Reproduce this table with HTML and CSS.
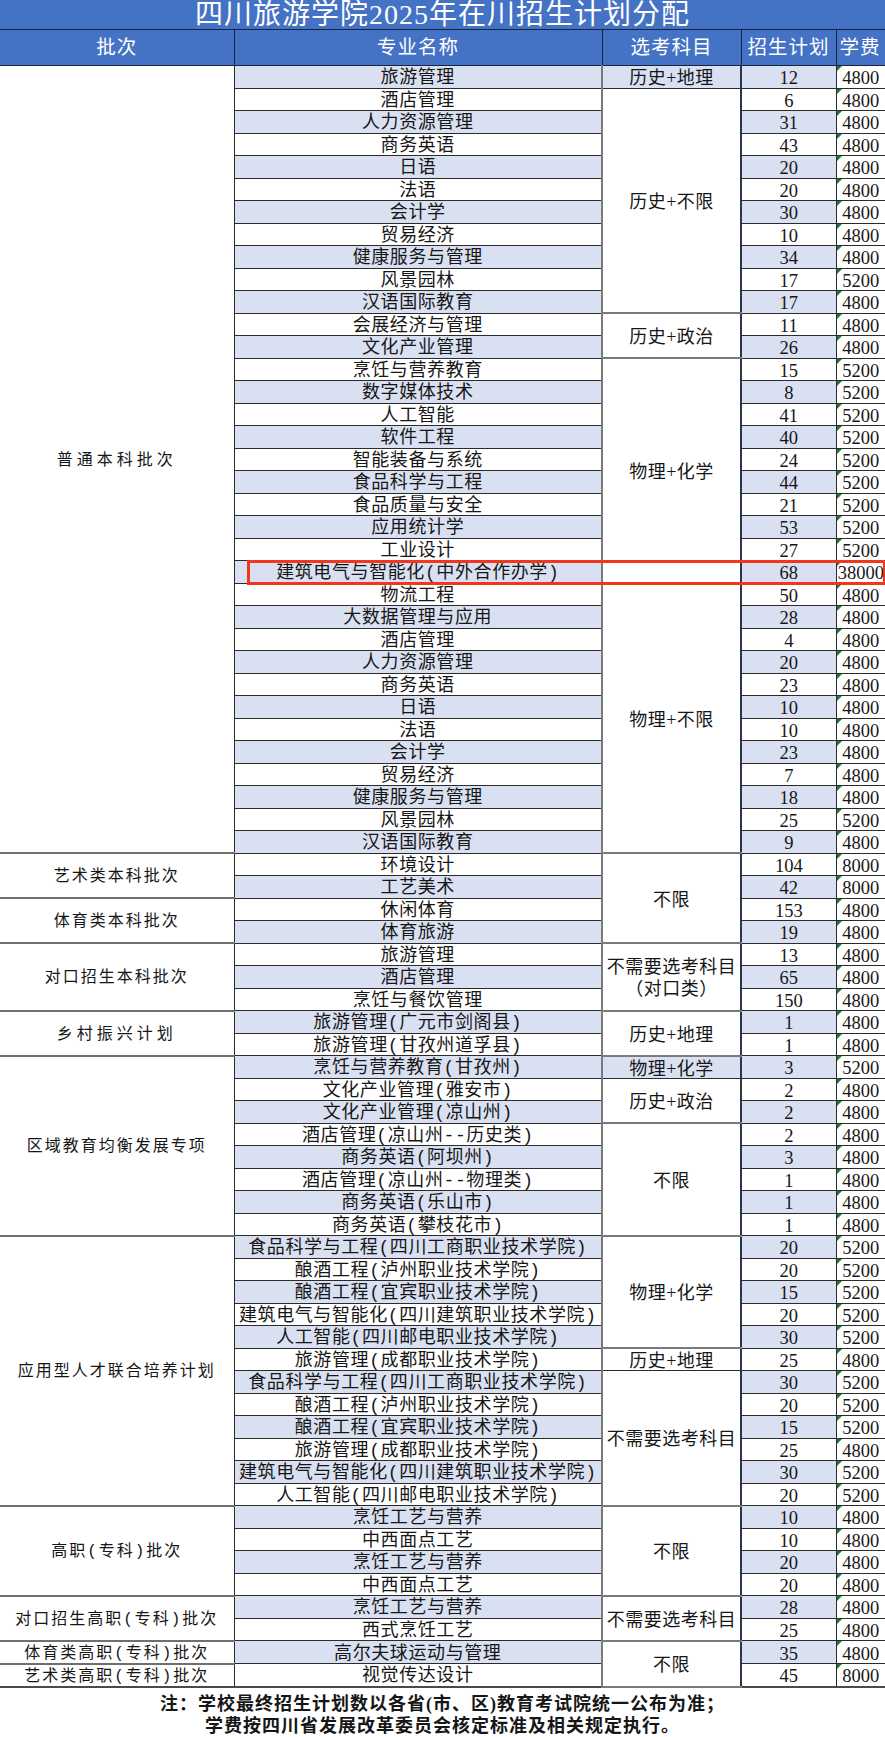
FILE: index.html
```html
<!DOCTYPE html>
<html lang="zh-CN">
<head>
<meta charset="utf-8">
<title>四川旅游学院2025年在川招生计划分配</title>
<link rel="stylesheet" href="styles.css">
</head>
<body>
<div class="title">四川旅游学院2025年在川招生计划分配</div>
<table class="plan">
<colgroup><col class="c1"><col class="c2"><col class="c3"><col class="c4"><col class="c5"></colgroup>
<thead>
<tr><th>批次</th><th>专业名称</th><th>选考科目</th><th>招生计划</th><th class="fh">学费</th></tr>
</thead>
<tbody>
<tr><td class="b wide" rowspan="35">普通本科批次</td><td class="m">旅游管理</td><td class="s1">历史+地理</td><td class="n">12</td><td class="f">4800</td></tr>
<tr><td class="m">酒店管理</td><td class="s" rowspan="10">历史+不限</td><td class="n">6</td><td class="f">4800</td></tr>
<tr><td class="m">人力资源管理</td><td class="n">31</td><td class="f">4800</td></tr>
<tr><td class="m">商务英语</td><td class="n">43</td><td class="f">4800</td></tr>
<tr><td class="m">日语</td><td class="n">20</td><td class="f">4800</td></tr>
<tr><td class="m">法语</td><td class="n">20</td><td class="f">4800</td></tr>
<tr><td class="m">会计学</td><td class="n">30</td><td class="f">4800</td></tr>
<tr><td class="m">贸易经济</td><td class="n">10</td><td class="f">4800</td></tr>
<tr><td class="m">健康服务与管理</td><td class="n">34</td><td class="f">4800</td></tr>
<tr><td class="m">风景园林</td><td class="n">17</td><td class="f">5200</td></tr>
<tr><td class="m">汉语国际教育</td><td class="n">17</td><td class="f">4800</td></tr>
<tr><td class="m">会展经济与管理</td><td class="s" rowspan="2">历史+政治</td><td class="n">11</td><td class="f">4800</td></tr>
<tr><td class="m">文化产业管理</td><td class="n">26</td><td class="f">4800</td></tr>
<tr><td class="m">烹饪与营养教育</td><td class="s" rowspan="10">物理+化学</td><td class="n">15</td><td class="f">5200</td></tr>
<tr><td class="m">数字媒体技术</td><td class="n">8</td><td class="f">5200</td></tr>
<tr><td class="m">人工智能</td><td class="n">41</td><td class="f">5200</td></tr>
<tr><td class="m">软件工程</td><td class="n">40</td><td class="f">5200</td></tr>
<tr><td class="m">智能装备与系统</td><td class="n">24</td><td class="f">5200</td></tr>
<tr><td class="m">食品科学与工程</td><td class="n">44</td><td class="f">5200</td></tr>
<tr><td class="m">食品质量与安全</td><td class="n">21</td><td class="f">5200</td></tr>
<tr><td class="m">应用统计学</td><td class="n">53</td><td class="f">5200</td></tr>
<tr><td class="m">工业设计</td><td class="n">27</td><td class="f">5200</td></tr>
<tr><td class="m hlcell">建筑电气与智能化(中外合作办学)<span class="hl"></span></td><td class="n">68</td><td class="f">38000</td></tr>
<tr><td class="m">物流工程</td><td class="s" rowspan="12">物理+不限</td><td class="n">50</td><td class="f">4800</td></tr>
<tr><td class="m">大数据管理与应用</td><td class="n">28</td><td class="f">4800</td></tr>
<tr><td class="m">酒店管理</td><td class="n">4</td><td class="f">4800</td></tr>
<tr><td class="m">人力资源管理</td><td class="n">20</td><td class="f">4800</td></tr>
<tr><td class="m">商务英语</td><td class="n">23</td><td class="f">4800</td></tr>
<tr><td class="m">日语</td><td class="n">10</td><td class="f">4800</td></tr>
<tr><td class="m">法语</td><td class="n">10</td><td class="f">4800</td></tr>
<tr><td class="m">会计学</td><td class="n">23</td><td class="f">4800</td></tr>
<tr><td class="m">贸易经济</td><td class="n">7</td><td class="f">4800</td></tr>
<tr><td class="m">健康服务与管理</td><td class="n">18</td><td class="f">4800</td></tr>
<tr><td class="m">风景园林</td><td class="n">25</td><td class="f">5200</td></tr>
<tr><td class="m">汉语国际教育</td><td class="n">9</td><td class="f">4800</td></tr>
<tr><td class="b" rowspan="2">艺术类本科批次</td><td class="m">环境设计</td><td class="s" rowspan="4">不限</td><td class="n">104</td><td class="f">8000</td></tr>
<tr><td class="m">工艺美术</td><td class="n">42</td><td class="f">8000</td></tr>
<tr><td class="b" rowspan="2">体育类本科批次</td><td class="m">休闲体育</td><td class="n">153</td><td class="f">4800</td></tr>
<tr><td class="m">体育旅游</td><td class="n">19</td><td class="f">4800</td></tr>
<tr><td class="b" rowspan="3">对口招生本科批次</td><td class="m">旅游管理</td><td class="s two" rowspan="3">不需要选考科目<br>（对口类）</td><td class="n">13</td><td class="f">4800</td></tr>
<tr><td class="m">酒店管理</td><td class="n">65</td><td class="f">4800</td></tr>
<tr><td class="m">烹饪与餐饮管理</td><td class="n">150</td><td class="f">4800</td></tr>
<tr><td class="b wide" rowspan="2">乡村振兴计划</td><td class="m">旅游管理(广元市剑阁县)</td><td class="s" rowspan="2">历史+地理</td><td class="n">1</td><td class="f">4800</td></tr>
<tr><td class="m">旅游管理(甘孜州道孚县)</td><td class="n">1</td><td class="f">4800</td></tr>
<tr><td class="b" rowspan="8">区域教育均衡发展专项</td><td class="m">烹饪与营养教育(甘孜州)</td><td class="s1">物理+化学</td><td class="n">3</td><td class="f">5200</td></tr>
<tr><td class="m">文化产业管理(雅安市)</td><td class="s" rowspan="2">历史+政治</td><td class="n">2</td><td class="f">4800</td></tr>
<tr><td class="m">文化产业管理(凉山州)</td><td class="n">2</td><td class="f">4800</td></tr>
<tr><td class="m">酒店管理(凉山州--历史类)</td><td class="s" rowspan="5">不限</td><td class="n">2</td><td class="f">4800</td></tr>
<tr><td class="m">商务英语(阿坝州)</td><td class="n">3</td><td class="f">4800</td></tr>
<tr><td class="m">酒店管理(凉山州--物理类)</td><td class="n">1</td><td class="f">4800</td></tr>
<tr><td class="m">商务英语(乐山市)</td><td class="n">1</td><td class="f">4800</td></tr>
<tr><td class="m">商务英语(攀枝花市)</td><td class="n">1</td><td class="f">4800</td></tr>
<tr><td class="b" rowspan="12">应用型人才联合培养计划</td><td class="m">食品科学与工程(四川工商职业技术学院)</td><td class="s" rowspan="5">物理+化学</td><td class="n">20</td><td class="f">5200</td></tr>
<tr><td class="m">酿酒工程(泸州职业技术学院)</td><td class="n">20</td><td class="f">5200</td></tr>
<tr><td class="m">酿酒工程(宜宾职业技术学院)</td><td class="n">15</td><td class="f">5200</td></tr>
<tr><td class="m">建筑电气与智能化(四川建筑职业技术学院)</td><td class="n">20</td><td class="f">5200</td></tr>
<tr><td class="m">人工智能(四川邮电职业技术学院)</td><td class="n">30</td><td class="f">5200</td></tr>
<tr><td class="m">旅游管理(成都职业技术学院)</td><td class="s1">历史+地理</td><td class="n">25</td><td class="f">4800</td></tr>
<tr><td class="m">食品科学与工程(四川工商职业技术学院)</td><td class="s" rowspan="6">不需要选考科目</td><td class="n">30</td><td class="f">5200</td></tr>
<tr><td class="m">酿酒工程(泸州职业技术学院)</td><td class="n">20</td><td class="f">5200</td></tr>
<tr><td class="m">酿酒工程(宜宾职业技术学院)</td><td class="n">15</td><td class="f">5200</td></tr>
<tr><td class="m">旅游管理(成都职业技术学院)</td><td class="n">25</td><td class="f">4800</td></tr>
<tr><td class="m">建筑电气与智能化(四川建筑职业技术学院)</td><td class="n">30</td><td class="f">5200</td></tr>
<tr><td class="m">人工智能(四川邮电职业技术学院)</td><td class="n">20</td><td class="f">5200</td></tr>
<tr><td class="b" rowspan="4">高职(专科)批次</td><td class="m">烹饪工艺与营养</td><td class="s" rowspan="4">不限</td><td class="n">10</td><td class="f">4800</td></tr>
<tr><td class="m">中西面点工艺</td><td class="n">10</td><td class="f">4800</td></tr>
<tr><td class="m">烹饪工艺与营养</td><td class="n">20</td><td class="f">4800</td></tr>
<tr><td class="m">中西面点工艺</td><td class="n">20</td><td class="f">4800</td></tr>
<tr><td class="b" rowspan="2">对口招生高职(专科)批次</td><td class="m">烹饪工艺与营养</td><td class="s" rowspan="2">不需要选考科目</td><td class="n">28</td><td class="f">4800</td></tr>
<tr><td class="m">西式烹饪工艺</td><td class="n">25</td><td class="f">4800</td></tr>
<tr><td class="b">体育类高职(专科)批次</td><td class="m">高尔夫球运动与管理</td><td class="s" rowspan="2">不限</td><td class="n">35</td><td class="f">4800</td></tr>
<tr><td class="b">艺术类高职(专科)批次</td><td class="m">视觉传达设计</td><td class="n">45</td><td class="f">8000</td></tr>
</tbody>
</table>
<div class="note">
<p>注：学校最终招生计划数以各省(市、区)教育考试院统一公布为准；</p>
<p>学费按四川省发展改革委员会核定标准及相关规定执行。</p>
</div>
</body>
</html>
```
FILE: styles.css
```css
html, body {
  margin: 0;
  padding: 0;
  overflow-x: hidden;
  background: #ffffff;
}

body {
  width: 885px;
  font-family: "Liberation Serif", "Noto Sans CJK SC", serif;
  color: #161616;
}

.title {
  height: 29px;
  background: #4472c4;
  color: #ffffff;
  font-size: 28px;
  line-height: 30px;
  letter-spacing: 1px;
  text-align: center;
  white-space: nowrap;
}

.plan {
  width: 885px;
  border-collapse: collapse;
  table-layout: fixed;
}

.c1 { width: 234px; }
.c2 { width: 368px; }
.c3 { width: 139px; }
.c4 { width: 95px; }
.c5 { width: 49px; }

.plan thead tr {
  height: 36px;
}

.plan th {
  background: #4472c4;
  color: #ffffff;
  font-weight: normal;
  font-size: 19.5px;
  letter-spacing: 1px;
  line-height: 22px;
  padding: 0;
  border: 1px solid #17243d;
  white-space: nowrap;
  overflow: hidden;
}

.plan th:first-child {
  border-left: none;
}

.plan th.fh {
  border-right: none;
  text-align: left;
  padding-left: 3px;
}

.plan tbody tr {
  height: 22.5px;
}

.plan td {
  padding: 3px 0 0;
  border: 1px solid #2b2b2b;
  text-align: center;
  vertical-align: middle;
  font-size: 18px;
  line-height: 18px;
  white-space: nowrap;
  background: #ffffff;
}

.plan td.b {
  border-left: none;
  border-bottom: 2px solid #6f6f6f;
  font-family: "Liberation Mono", "Noto Sans CJK SC", monospace;
  font-size: 16px;
  letter-spacing: 2px;
}

.plan td.b.wide {
  letter-spacing: 4px;
}

.plan td.m {
  font-family: "Liberation Mono", "Noto Sans CJK SC", monospace;
  letter-spacing: 0.6px;
}

.plan td.s,
.plan td.s1 {
  letter-spacing: 0.5px;
  border-left: 2px solid #7a7a7a;
  border-right: 2px solid #2a3550;
}

.plan td.s {
  border-bottom: 2px solid #7a7a7a;
}

.plan td.two {
  line-height: 22px;
}

.plan td.n {
  font-size: 18.5px;
}

.plan td.f {
  position: relative;
  font-size: 18.5px;
  border-right: none;
  overflow: visible;
}

.plan td.f::before {
  content: "";
  position: absolute;
  left: 0;
  top: 0;
  border-top: 5px solid #1d7a33;
  border-right: 5px solid transparent;
}

.plan tbody tr:nth-child(odd) td.m,
.plan tbody tr:nth-child(odd) td.n,
.plan tbody tr:nth-child(odd) td.s1 {
  background: #d9e0f1;
}

.plan tbody tr:last-child td {
  border-bottom: 2px solid #4a4a4a;
}

.hlcell {
  position: relative;
}

.hl {
  position: absolute;
  left: 12px;
  top: -1px;
  width: 639px;
  height: 25px;
  box-sizing: border-box;
  border: 3px solid #f2361c;
  z-index: 2;
}

.note {
  padding-top: 5px;
  text-align: center;
  font-family: "Liberation Serif", "Noto Sans CJK SC", serif;
  font-weight: bold;
  font-size: 18px;
  letter-spacing: 1px;
  line-height: 22px;
}

.note p {
  margin: 0;
}
```
